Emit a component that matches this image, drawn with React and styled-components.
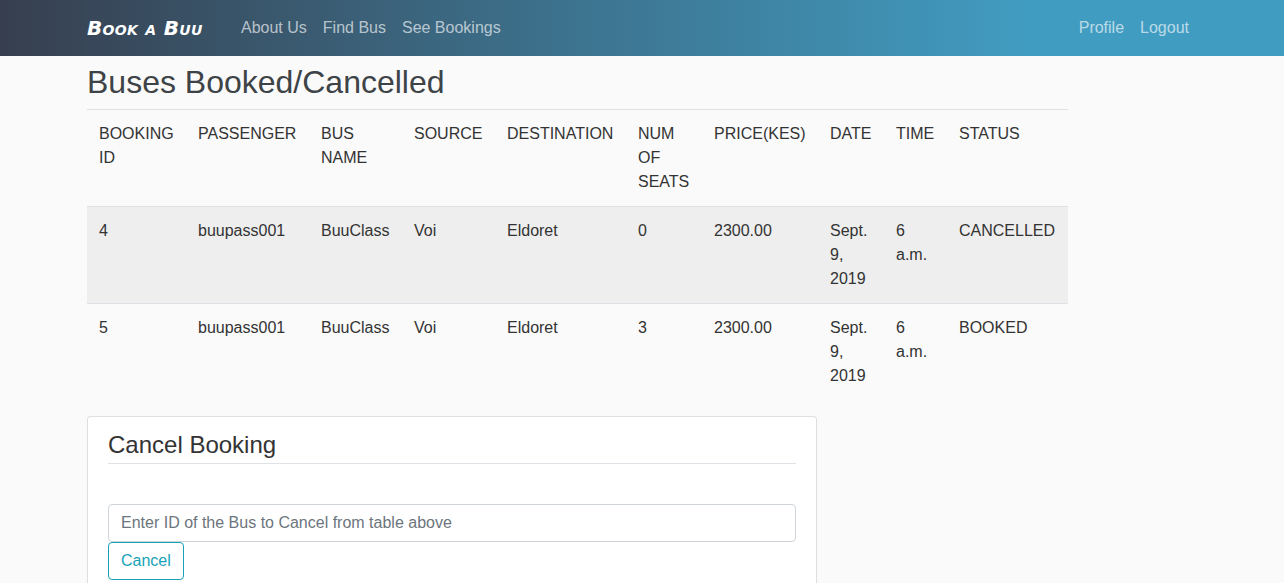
import React from "react";
import styled, { createGlobalStyle } from "styled-components";

const GlobalStyle = createGlobalStyle`
    * {
        box-sizing: border-box;
    }

    body {
        margin: 0;
        background-color: #fafafa;
        color: #333333;
        font-family: "Liberation Sans", Arial, sans-serif;
        font-size: 16px;
        line-height: 1.5;
    }
`;

const Navbar = styled.nav`
    height: 56px;
    background: linear-gradient(to right, #373f4f 0%, #419cc1 80%, #419cc1 100%);
`;

const NavInner = styled.div`
    width: 1140px;
    height: 100%;
    margin: 0 auto;
    padding: 0 15px;
    display: flex;
    align-items: center;
`;

const Brand = styled.a`
    width: 154px;
    color: #fff;
    font-family: "DejaVu Sans", sans-serif;
    font-size: 20px;
    font-style: italic;
    font-weight: 700;
    font-variant: small-caps;
    letter-spacing: 0.3px;
    white-space: nowrap;
`;

const NavLinks = styled.div`
    display: flex;
    gap: 16px;
    margin-left: ${({ $right }) => ($right ? "auto" : "0")};
    margin-right: ${({ $right }) => ($right ? "8px" : "0")};
`;

const NavLink = styled.a`
    color: rgba(255, 255, 255, 0.65);
`;

const Container = styled.main`
    width: 1140px;
    margin: 0 auto;
    padding: 0 15px;
`;

const Content = styled.div`
    width: 981px;
`;

const PageTitle = styled.h2`
    margin: 0;
    height: 54px;
    padding-top: 7px;
    border-bottom: 1px solid #dee2e6;
    color: #3d4346;
    font-size: 32px;
    font-weight: 500;
    line-height: 38px;
`;

const Table = styled.table`
    width: 100%;
    border-collapse: collapse;
    table-layout: fixed;
`;

const Column = styled.col`
    width: ${({ $width }) => $width}px;
`;

const HeadCell = styled.th`
    padding: 12px;
    font-weight: 400;
    text-align: left;
    vertical-align: top;
`;

const Row = styled.tr`
    background-color: ${({ $shaded }) => ($shaded ? "#eeeeee" : "transparent")};
`;

const Cell = styled.td`
    padding: 12px;
    border-top: 1px solid #dee2e6;
    vertical-align: top;
`;

const Card = styled.section`
    width: 730px;
    margin-top: 16px;
    padding: 12px 20px 20px;
    background-color: #fff;
    border: 1px solid rgba(0, 0, 0, 0.125);
    border-radius: 4px;
`;

const CardTitle = styled.h3`
    margin: 0 0 40px;
    padding-bottom: 3px;
    border-bottom: 1px solid #dee2e6;
    font-size: 24px;
    font-weight: 500;
    line-height: 31px;
`;

const Input = styled.input`
    display: block;
    width: 100%;
    height: 38px;
    padding: 6px 12px;
    background-color: #fff;
    border: 1px solid #ced4da;
    border-radius: 4px;
    color: #495057;
    font-family: inherit;
    font-size: 16px;

    &::placeholder {
        color: #6c757d;
        opacity: 1;
    }
`;

const CancelButton = styled.button`
    display: block;
    height: 38px;
    padding: 6px 12px;
    background-color: transparent;
    border: 1px solid #17a2b8;
    border-radius: 4px;
    color: #17a2b8;
    font-family: inherit;
    font-size: 16px;
    line-height: 1.5;
`;

const columns = [
    { label: "BOOKING ID", width: 99 },
    { label: "PASSENGER", width: 123 },
    { label: "BUS NAME", width: 93 },
    { label: "SOURCE", width: 93 },
    { label: "DESTINATION", width: 131 },
    { label: "NUM OF SEATS", width: 76 },
    { label: "PRICE(KES)", width: 116 },
    { label: "DATE", width: 66 },
    { label: "TIME", width: 63 },
    { label: "STATUS", width: 121 },
];

const bookings = [
    ["4", "buupass001", "BuuClass", "Voi", "Eldoret", "0", "2300.00", "Sept. 9, 2019", "6 a.m.", "CANCELLED"],
    ["5", "buupass001", "BuuClass", "Voi", "Eldoret", "3", "2300.00", "Sept. 9, 2019", "6 a.m.", "BOOKED"],
];

export default function App() {
    return (
        <>
            <GlobalStyle />
            <Navbar>
                <NavInner>
                    <Brand>Book a Buu</Brand>
                    <NavLinks>
                        <NavLink>About Us</NavLink>
                        <NavLink>Find Bus</NavLink>
                        <NavLink>See Bookings</NavLink>
                    </NavLinks>
                    <NavLinks $right>
                        <NavLink>Profile</NavLink>
                        <NavLink>Logout</NavLink>
                    </NavLinks>
                </NavInner>
            </Navbar>
            <Container>
                <Content>
                    <PageTitle>Buses Booked/Cancelled</PageTitle>
                    <Table>
                        <colgroup>
                            {columns.map((col) => (
                                <Column key={col.label} $width={col.width} />
                            ))}
                        </colgroup>
                        <thead>
                            <tr>
                                {columns.map((col) => (
                                    <HeadCell key={col.label}>{col.label}</HeadCell>
                                ))}
                            </tr>
                        </thead>
                        <tbody>
                            {bookings.map((booking, idx) => (
                                <Row key={booking[0]} $shaded={idx === 0}>
                                    {booking.map((value, i) => (
                                        <Cell key={i}>{value}</Cell>
                                    ))}
                                </Row>
                            ))}
                        </tbody>
                    </Table>
                    <Card>
                        <CardTitle>Cancel Booking</CardTitle>
                        <Input placeholder="Enter ID of the Bus to Cancel from table above" />
                        <CancelButton>Cancel</CancelButton>
                    </Card>
                </Content>
            </Container>
        </>
    );
}
